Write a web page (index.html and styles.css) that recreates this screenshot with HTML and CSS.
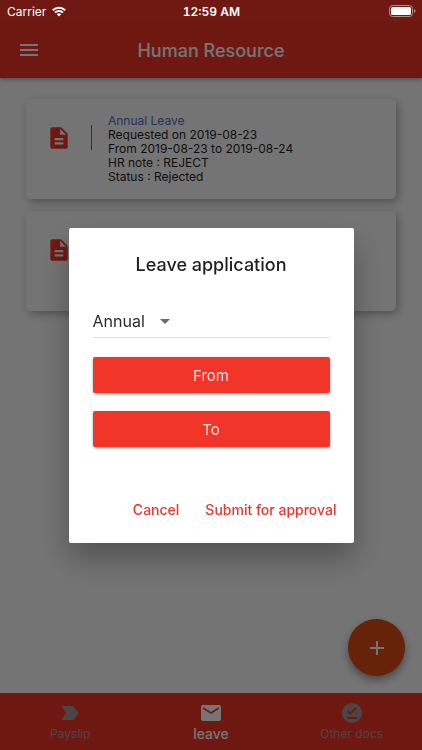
FILE: index.html
```html
<!DOCTYPE html>
<html lang="en">
<head>
<meta charset="utf-8">
<meta name="viewport" content="width=device-width, initial-scale=1">
<title>Human Resource</title>
<link rel="stylesheet" href="styles.css">
</head>
<body>
<div class="app">
  <div class="status">
    <div class="carrier">
      <span>Carrier</span>
      <svg width="14" height="11" viewBox="0 0 14 11" fill="none" stroke="#fff" stroke-width="2"><path d="M.8 4.2a8.8 8.8 0 0 1 12.4 0M3 6.6a5.7 5.7 0 0 1 8 0"/><path d="M7 10.5 4.8 8.2a3.2 3.2 0 0 1 4.4 0z" fill="#fff" stroke="none"/></svg>
    </div>
    <span class="clock">12:59 AM</span>
    <svg class="battery" width="27" height="12" viewBox="0 0 27 12"><rect x=".5" y=".5" width="23" height="11" rx="3" fill="none" stroke="#b88c88"/><rect x="2" y="2" width="20" height="8" rx="1.5" fill="#fff"/><path d="M25 4v4q1.500-.5 1.500-2T25 4z" fill="#b88c88"/></svg>
  </div>
  <header class="appbar">
    <button class="menu" type="button" aria-label="Menu"><svg width="18" height="12" viewBox="0 0 18 12" fill="currentColor"><path d="M0 0h18v2H0zM0 5h18v2H0zM0 10h18v2H0z"/></svg></button>
    <h1>Human Resource</h1>
  </header>
  <main class="list">
    <article class="card">
      <svg class="doc" width="26" height="26" viewBox="0 0 24 24" fill="currentColor"><path d="M14 2H6a2 2 0 0 0-2 2v16c0 1.100.9 2 2 2h12a2 2 0 0 0 2-2V8l-6-6zm2 16H8v-2h8v2zm0-4H8v-2h8v2zm-3-5V3.500L18.500 9H13z"/></svg>
      <div class="rule"></div>
      <div class="details">
        <h2>Annual Leave</h2>
        <p>Requested on 2019-08-23</p>
        <p>From 2019-08-23 to 2019-08-24</p>
        <p>HR note : REJECT</p>
        <p>Status : Rejected</p>
      </div>
    </article>
    <article class="card">
      <svg class="doc" width="26" height="26" viewBox="0 0 24 24" fill="currentColor"><path d="M14 2H6a2 2 0 0 0-2 2v16c0 1.100.9 2 2 2h12a2 2 0 0 0 2-2V8l-6-6zm2 16H8v-2h8v2zm0-4H8v-2h8v2zm-3-5V3.500L18.500 9H13z"/></svg>
    </article>
  </main>
  <button class="fab" type="button" aria-label="Add leave"><svg width="14" height="14" viewBox="0 0 14 14" fill="currentColor"><path d="M6 0h2v6h6v2H8v6H6V8H0V6h6z"/></svg></button>
  <nav class="tabs">
    <a href="#payslip"><svg width="24" height="24" viewBox="0 0 24 24" fill="currentColor"><path d="m3.500 18.990 11 .01c.67 0 1.270-.33 1.630-.84L20.500 12l-4.370-6.160c-.36-.51-.96-.84-1.630-.84l-11 .01L8.340 12 3.500 18.990z"/></svg><span>Payslip</span></a>
    <a class="current" href="#leave"><svg width="24" height="24" viewBox="0 0 24 24" fill="currentColor"><path d="M20 4H4a2 2 0 0 0-1.990 2L2 18c0 1.100.9 2 2 2h16a2 2 0 0 0 2-2V6a2 2 0 0 0-2-2zm0 4-8 5-8-5V6l8 5 8-5v2z"/></svg><span>leave</span></a>
    <a href="#docs"><svg width="24" height="24" viewBox="0 0 24 24" fill="currentColor"><path d="M12 2a10 10 0 1 0 0 20 10 10 0 0 0 0-20zm5 16H7v-2h10v2zm-6.700-4L7 10.700l1.400-1.400 1.900 1.900 5.300-5.300L17 7.300 10.300 14z"/></svg><span>Other docs</span></a>
  </nav>
</div>
<div class="backdrop">
  <form class="dialog" role="dialog" aria-labelledby="dialog-title">
    <h2 id="dialog-title">Leave application</h2>
    <div class="field">
      <select aria-label="Leave type"><option>Annual</option></select>
      <svg width="10" height="5" viewBox="0 0 10 5" fill="#6b6b6b"><path d="M0 0h10L5 5z"/></svg>
    </div>
    <button class="date" type="button">From</button>
    <button class="date" type="button">To</button>
    <div class="actions">
      <button type="button">Cancel</button>
      <button type="submit">Submit for approval</button>
    </div>
  </form>
</div>
</body>
</html>
```
FILE: styles.css
```css
* { box-sizing: border-box; }
body {
  margin: 0;
  font-family: Inter, "Liberation Sans", sans-serif;
  color: #1f1f1f;
}
h1, h2, p { margin: 0; }
button, select { font: inherit; border: 0; padding: 0; background: none; color: inherit; }
svg { display: block; flex: none; }

.app {
  min-height: 100vh;
  display: flex;
  flex-direction: column;
  background: #fdfdfd;
}
.status {
  position: relative;
  z-index: 3;
  height: 22px;
  padding: 0 6px 0 7px;
  display: grid;
  grid-template-columns: 1fr auto 1fr;
  align-items: center;
  font-size: 12px;
  color: #fff;
  background: #6f1912;
}
.carrier { display: flex; align-items: center; gap: 6px; }
.clock { font-weight: 600; font-variant-numeric: tabular-nums; }
.battery { justify-self: end; }

.appbar {
  height: 56px;
  padding: 0 20px;
  display: grid;
  grid-template-columns: 1fr auto 1fr;
  align-items: center;
  color: #fff;
  background: #f13529;
  box-shadow: 0 1px 5px rgba(0, 0, 0, .4);
}
.menu { justify-self: start; }
.appbar h1 { font-size: 18px; font-weight: 500; }

.list {
  flex: 1;
  padding: 21px 26px;
  display: flex;
  flex-direction: column;
  gap: 12px;
}
.card {
  min-height: 100px;
  padding: 15px 20px 14px;
  display: flex;
  border-radius: 5px;
  background: #fdfdfd;
  box-shadow: 2px 3px 8px rgba(0, 0, 0, .3);
}
.doc { margin-top: 11px; color: #f13529; }
.rule { width: 1px; height: 25px; margin: 11px 16px 0 19px; background: #ff2a1c; }
.details { font-size: 12px; line-height: 14px; }
.details h2 { font-size: 12px; font-weight: 400; color: #5c6bc0; }

.fab {
  align-self: flex-end;
  width: 57px;
  height: 57px;
  margin: 0 17px 17px 0;
  display: grid;
  place-items: center;
  border-radius: 50%;
  color: #fff;
  background: #e04a16;
  box-shadow: 0 4px 8px rgba(0, 0, 0, .4);
}

.tabs {
  height: 57px;
  display: grid;
  grid-template-columns: repeat(3, 1fr);
  background: #f13529;
}
.tabs a {
  padding-top: 8px;
  display: flex;
  flex-direction: column;
  align-items: center;
  font-size: 12px;
  line-height: 18px;
  color: #a39a98;
  text-decoration: none;
}
.tabs .current { font-size: 14px; font-weight: 500; color: #fff; }

.backdrop {
  position: fixed;
  inset: 0;
  z-index: 2;
  padding: 21px 16px 0;
  display: grid;
  place-items: center;
  background: rgba(0, 0, 0, .54);
}
.dialog {
  width: 100%;
  max-width: 285px;
  padding: 24px 24px 15px;
  display: flex;
  flex-direction: column;
  border-radius: 2px;
  background: #fff;
  box-shadow: 0 16px 32px rgba(0, 0, 0, .3);
}
.dialog h2 {
  font-size: 18px;
  font-weight: 500;
  line-height: 26px;
  text-align: center;
}
.field {
  height: 33px;
  margin: 27px 0 19px;
  display: flex;
  align-items: center;
  gap: 14px;
  border-bottom: 1px solid #e0e0e0;
}
.field select { appearance: none; font-size: 16px; color: #2b2b2b; }
.date {
  height: 36px;
  border-radius: 2px;
  font-size: 15px;
  color: #fdd;
  background: #f13529;
  box-shadow: 0 1px 3px rgba(0, 0, 0, .35);
}
.date + .date { margin-top: 18px; }
.actions {
  margin: 45px -7px 0 0;
  display: flex;
  justify-content: flex-end;
  gap: 26px;
  font-size: 14px;
  font-weight: 500;
  line-height: 36px;
  color: #e53930;
}
```
